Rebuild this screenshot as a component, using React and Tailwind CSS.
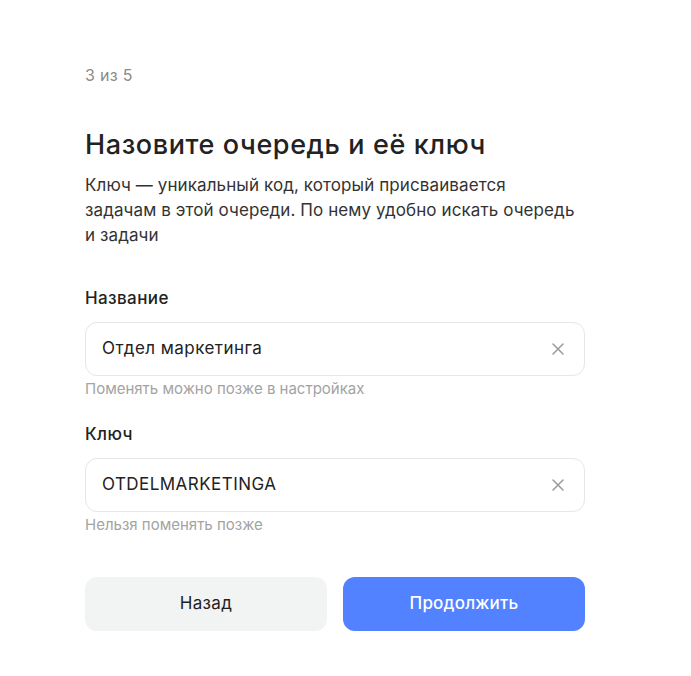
import React from 'react';

function ClearIcon() {
  return (
    <svg width="14" height="14" viewBox="0 0 14 14" fill="none" className="shrink-0">
      <path d="M2 2L12 12M12 2L2 12" stroke="#9a9a9a" strokeWidth="1.5" strokeLinecap="round" />
    </svg>
  );
}

function Field({ label, value, hint }) {
  return (
    <div className="flex flex-col">
      <div className="text-[17px] leading-[22px] font-medium tracking-[0.4px] text-[#222]">{label}</div>
      <div className="mt-[13px] h-[54px] rounded-[12px] border border-[#e6e6e6] flex items-center pl-[16px] pr-[19px]">
        <div className="flex-1 text-[17px] tracking-[0.45px] text-[#222]">{value}</div>
        <ClearIcon />
      </div>
      <div className="mt-[5px] text-[15px] leading-[16px] text-[#a3a3a3]">{hint}</div>
    </div>
  );
}

export default function App() {
  return (
    <div className="min-h-screen bg-white font-['Inter',sans-serif]">
      <div className="w-[500px] ml-[85px] pt-[65px] flex flex-col">
        <div className="text-[16px] leading-[20px] tracking-[0.3px] text-[#8a8a8a]">3 из 5</div>
        <h1 className="mt-[44px] text-[27px] leading-[32px] font-medium tracking-[0.6px] text-[#222]">Назовите очередь и её ключ</h1>
        <p className="mt-[12px] text-[17px] leading-[25px] tracking-[0.1px] text-[#333] whitespace-nowrap">
          Ключ — уникальный код, который присваивается<br />
          задачам в этой очереди. По нему удобно искать очередь<br />
          и задачи
        </p>
        <div className="mt-[39px]">
          <Field label="Название" value="Отдел маркетинга" hint="Поменять можно позже в настройках" />
        </div>
        <div className="mt-[26px]">
          <Field label="Ключ" value="OTDELMARKETINGA" hint="Нельзя поменять позже" />
        </div>
        <div className="mt-[44px] flex gap-[16px]">
          <button className="flex-1 h-[54px] rounded-[12px] bg-[#f2f3f3] text-[17px] tracking-[0.3px] text-[#222]">Назад</button>
          <button className="flex-1 h-[54px] rounded-[12px] bg-[#5282ff] text-[17px] font-medium tracking-[0.2px] text-white">Продолжить</button>
        </div>
      </div>
    </div>
  );
}
